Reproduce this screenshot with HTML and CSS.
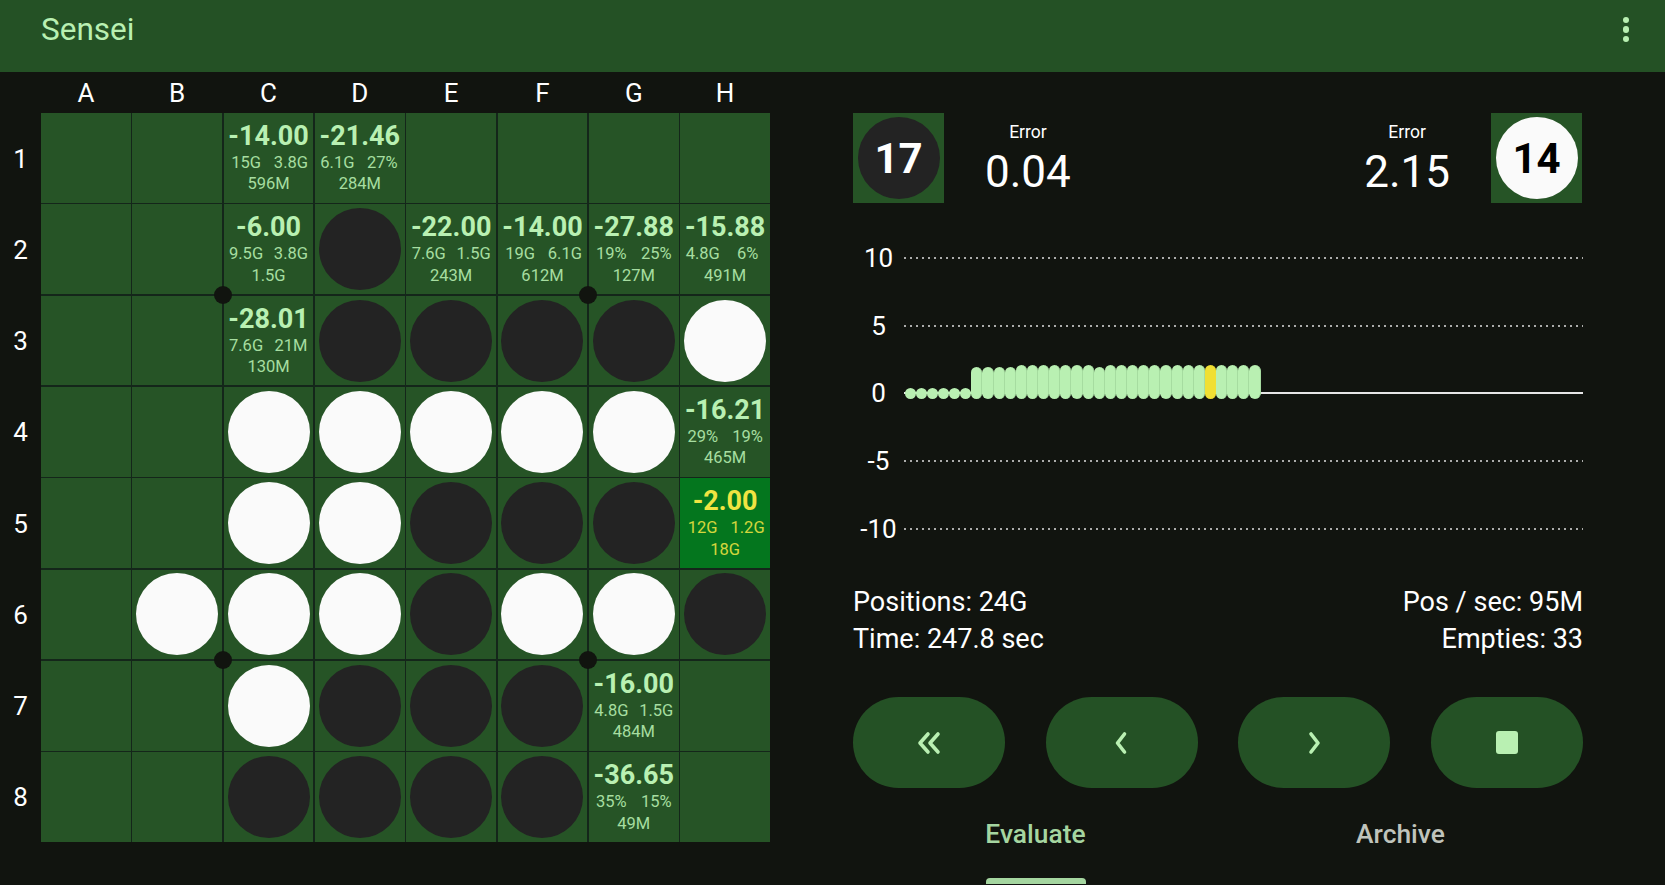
FILE: index.html
```html
<!DOCTYPE html>
<html lang="en">
<head>
    <meta charset="UTF-8">
    <meta name="viewport" content="width=device-width, initial-scale=1.0">
    <title>Sensei</title>
    <link rel="stylesheet" href="styles.css">
</head>
<body>
    <!-- App bar -->
    <header class="app-bar">
        <span class="app-title">Sensei</span>
        <div class="menu-dots"><i></i><i></i><i></i></div>
    </header>

    <main class="content">
        <!-- Board -->
        <section class="board-area">
            <div class="col-labels">
                <span>A</span><span>B</span><span>C</span><span>D</span><span>E</span><span>F</span><span>G</span><span>H</span>
            </div>
            <div class="board-row">
                <div class="row-labels">
                    <span>1</span><span>2</span><span>3</span><span>4</span><span>5</span><span>6</span><span>7</span><span>8</span>
                </div>
                <div class="board">
                    <!-- row 1 -->
                    <div class="cell"></div>
                    <div class="cell"></div>
                    <div class="cell"><b>-14.00</b><div class="pair"><span>15G</span><span>3.8G</span></div><small>596M</small></div>
                    <div class="cell"><b>-21.46</b><div class="pair"><span>6.1G</span><span>27%</span></div><small>284M</small></div>
                    <div class="cell"></div>
                    <div class="cell"></div>
                    <div class="cell"></div>
                    <div class="cell"></div>
                    <!-- row 2 -->
                    <div class="cell"></div>
                    <div class="cell"></div>
                    <div class="cell"><b>-6.00</b><div class="pair"><span>9.5G</span><span>3.8G</span></div><small>1.5G</small></div>
                    <div class="cell"><div class="disc black"></div></div>
                    <div class="cell"><b>-22.00</b><div class="pair"><span>7.6G</span><span>1.5G</span></div><small>243M</small></div>
                    <div class="cell"><b>-14.00</b><div class="pair"><span>19G</span><span>6.1G</span></div><small>612M</small></div>
                    <div class="cell"><b>-27.88</b><div class="pair"><span>19%</span><span>25%</span></div><small>127M</small></div>
                    <div class="cell"><b>-15.88</b><div class="pair"><span>4.8G</span><span>6%</span></div><small>491M</small></div>
                    <!-- row 3 -->
                    <div class="cell"></div>
                    <div class="cell"></div>
                    <div class="cell"><b>-28.01</b><div class="pair"><span>7.6G</span><span>21M</span></div><small>130M</small></div>
                    <div class="cell"><div class="disc black"></div></div>
                    <div class="cell"><div class="disc black"></div></div>
                    <div class="cell"><div class="disc black"></div></div>
                    <div class="cell"><div class="disc black"></div></div>
                    <div class="cell"><div class="disc white"></div></div>
                    <!-- row 4 -->
                    <div class="cell"></div>
                    <div class="cell"></div>
                    <div class="cell"><div class="disc white"></div></div>
                    <div class="cell"><div class="disc white"></div></div>
                    <div class="cell"><div class="disc white"></div></div>
                    <div class="cell"><div class="disc white"></div></div>
                    <div class="cell"><div class="disc white"></div></div>
                    <div class="cell"><b>-16.21</b><div class="pair"><span>29%</span><span>19%</span></div><small>465M</small></div>
                    <!-- row 5 -->
                    <div class="cell"></div>
                    <div class="cell"></div>
                    <div class="cell"><div class="disc white"></div></div>
                    <div class="cell"><div class="disc white"></div></div>
                    <div class="cell"><div class="disc black"></div></div>
                    <div class="cell"><div class="disc black"></div></div>
                    <div class="cell"><div class="disc black"></div></div>
                    <div class="cell best"><b>-2.00</b><div class="pair"><span>12G</span><span>1.2G</span></div><small>18G</small></div>
                    <!-- row 6 -->
                    <div class="cell"></div>
                    <div class="cell"><div class="disc white"></div></div>
                    <div class="cell"><div class="disc white"></div></div>
                    <div class="cell"><div class="disc white"></div></div>
                    <div class="cell"><div class="disc black"></div></div>
                    <div class="cell"><div class="disc white"></div></div>
                    <div class="cell"><div class="disc white"></div></div>
                    <div class="cell"><div class="disc black"></div></div>
                    <!-- row 7 -->
                    <div class="cell"></div>
                    <div class="cell"></div>
                    <div class="cell"><div class="disc white"></div></div>
                    <div class="cell"><div class="disc black"></div></div>
                    <div class="cell"><div class="disc black"></div></div>
                    <div class="cell"><div class="disc black"></div></div>
                    <div class="cell"><b>-16.00</b><div class="pair"><span>4.8G</span><span>1.5G</span></div><small>484M</small></div>
                    <div class="cell"></div>
                    <!-- row 8 -->
                    <div class="cell"></div>
                    <div class="cell"></div>
                    <div class="cell"><div class="disc black"></div></div>
                    <div class="cell"><div class="disc black"></div></div>
                    <div class="cell"><div class="disc black"></div></div>
                    <div class="cell"><div class="disc black"></div></div>
                    <div class="cell"><b>-36.65</b><div class="pair"><span>35%</span><span>15%</span></div><small>49M</small></div>
                    <div class="cell"></div>

                    <!-- Corner markers -->
                    <i class="marker m-tl"></i>
                    <i class="marker m-tr"></i>
                    <i class="marker m-bl"></i>
                    <i class="marker m-br"></i>
                </div>
            </div>
        </section>

        <!-- Side panel -->
        <section class="panel">
            <div class="score-row">
                <div class="player">
                    <div class="player-box"><div class="player-disc black">17</div></div>
                    <div class="error-block"><span class="error-label">Error</span><span class="error-value">0.04</span></div>
                </div>
                <div class="player">
                    <div class="error-block"><span class="error-label">Error</span><span class="error-value">2.15</span></div>
                    <div class="player-box"><div class="player-disc white">14</div></div>
                </div>
            </div>

            <!-- Error chart -->
            <div class="chart">
                <div class="chart-row"><span>10</span><div class="grid-line"></div></div>
                <div class="chart-row"><span>5</span><div class="grid-line"></div></div>
                <div class="chart-row">
                    <span>0</span><div class="zero-line"></div>
                    <div class="bars">
                        <i class="dot"></i><i class="dot"></i><i class="dot"></i><i class="dot"></i><i class="dot"></i><i class="dot"></i>
                        <i class="bar"></i><i class="bar"></i><i class="bar"></i><i class="bar"></i><i class="bar high"></i>
                        <i class="bar high"></i><i class="bar high"></i><i class="bar high"></i><i class="bar high"></i><i class="bar high"></i>
                        <i class="bar high"></i><i class="bar"></i><i class="bar high"></i><i class="bar high"></i><i class="bar high"></i>
                        <i class="bar high"></i><i class="bar high"></i><i class="bar high"></i><i class="bar high"></i><i class="bar high"></i>
                        <i class="bar high"></i><i class="bar high current"></i><i class="bar high"></i><i class="bar high"></i><i class="bar high"></i>
                        <i class="bar high"></i>
                    </div>
                </div>
                <div class="chart-row"><span>-5</span><div class="grid-line"></div></div>
                <div class="chart-row"><span>-10</span><div class="grid-line"></div></div>
            </div>

            <div class="stats">
                <div><p>Positions: 24G</p><p>Time: 247.8 sec</p></div>
                <div class="stats-right"><p>Pos / sec: 95M</p><p>Empties: 33</p></div>
            </div>

            <div class="controls">
                <button class="control">
                    <svg width="28" height="24" viewBox="0 0 28 24"><path d="M13 3 5 12l8 9M23 3l-8 9 8 9"/></svg>
                </button>
                <button class="control">
                    <svg width="16" height="24" viewBox="0 0 16 24"><path d="M10.5 3l-7 9 7 9"/></svg>
                </button>
                <button class="control">
                    <svg width="16" height="24" viewBox="0 0 16 24"><path d="M5 3l7 9-7 9"/></svg>
                </button>
                <button class="control"><span class="stop-icon"></span></button>
            </div>

            <div class="tabs">
                <div class="tab active">Evaluate<span class="tab-indicator"></span></div>
                <div class="tab">Archive</div>
            </div>
        </section>
    </main>
</body>
</html>
```

FILE: styles.css
```css
* {
    box-sizing: border-box;
}
body {
    margin: 0;
    height: 885px;
    overflow: hidden;
    font-family: Roboto, "Liberation Sans", sans-serif;
    background-color: #11140f;
    color: #fff;
}

/* App bar */
.app-bar {
    height: 72px;
    padding: 0 36px 13px 41px;
    background-color: #245125;
    display: flex;
    justify-content: space-between;
    align-items: center;
}
.app-title {
    font-size: 31.5px;
    color: #b9f0b2;
}
.menu-dots {
    display: flex;
    flex-direction: column;
    gap: 3px;
}
.menu-dots i {
    width: 6.5px;
    height: 6.5px;
    border-radius: 50%;
    background-color: #b9f0b2;
}

.content {
    display: flex;
    gap: 83px;
}

/* Board */
.board-area {
    width: 770px;
}
.col-labels {
    height: 41px;
    margin-left: 41px;
    display: grid;
    grid-template-columns: repeat(8, 1fr);
    column-gap: 1.6px;
    align-items: center;
    text-align: center;
    font-size: 26px;
}
.board-row {
    display: flex;
}
.row-labels {
    width: 41px;
    padding-top: 1px;
    display: grid;
    grid-template-rows: repeat(8, 1fr);
    row-gap: 1.6px;
    align-items: center;
    text-align: center;
    font-size: 26px;
}
.board {
    position: relative;
    width: 729px;
    height: 729px;
    display: grid;
    grid-template-columns: repeat(8, 1fr);
    grid-template-rows: repeat(8, 1fr);
    gap: 1.6px;
    background-color: #14261a;
}
.cell {
    background-color: #265426;
    display: flex;
    flex-direction: column;
    align-items: center;
    justify-content: center;
    color: #b9f0b2;
    font-size: 16.5px;
    line-height: 21.5px;
}
.cell b {
    font-size: 27px;
    line-height: 30px;
    margin-bottom: 1px;
}
.cell .pair {
    width: 100%;
    display: grid;
    grid-template-columns: 1fr 1fr;
    text-align: center;
    opacity: 0.88;
}
.cell small {
    font-size: 16.5px;
    opacity: 0.88;
}
.cell.best {
    background-color: #04761e;
    color: #f0e442;
}
.disc {
    width: 82px;
    height: 82px;
    border-radius: 50%;
}
.disc.black {
    background-color: #232323;
}
.disc.white {
    background-color: #fafafa;
}
.marker {
    position: absolute;
    width: 18px;
    height: 18px;
    border-radius: 50%;
    background-color: #11140f;
}
.m-tl { left: 173px; top: 173px; }
.m-tr { left: 538px; top: 173px; }
.m-bl { left: 173px; top: 538px; }
.m-br { left: 538px; top: 538px; }

/* Side panel */
.panel {
    width: 730px;
    padding-top: 41px;
}
.score-row {
    padding-right: 1px;
    display: flex;
    justify-content: space-between;
}
.player {
    display: flex;
    align-items: center;
    gap: 41px;
}
.player-box {
    width: 91px;
    height: 90px;
    background-color: #265426;
    display: flex;
    align-items: center;
    justify-content: center;
}
.player-disc {
    width: 82px;
    height: 82px;
    border-radius: 50%;
    display: flex;
    align-items: center;
    justify-content: center;
    font-size: 42px;
    font-weight: 700;
}
.player-disc.black {
    background-color: #232323;
    color: #fff;
}
.player-disc.white {
    background-color: #fafafa;
    color: #000;
}
.error-block {
    padding-top: 5px;
    display: flex;
    flex-direction: column;
    align-items: center;
}
.error-label {
    font-size: 17.5px;
    line-height: 22px;
}
.error-value {
    font-size: 44px;
    line-height: 58px;
}

/* Chart */
.chart {
    margin-top: 21px;
}
.chart-row {
    position: relative;
    height: 67.7px;
    display: flex;
    align-items: center;
    font-size: 26px;
}
.chart-row span {
    width: 51px;
    text-align: center;
}
.grid-line {
    flex: 1;
    height: 2px;
    background-image: repeating-linear-gradient(90deg, rgba(255, 255, 255, 0.65) 0 2px, transparent 2px 6px);
}
.zero-line {
    flex: 1;
    height: 2px;
    background-color: #e6e6e6;
}
.bars {
    position: absolute;
    left: 51.5px;
    top: 5.5px;
    height: 34px;
    display: flex;
    align-items: flex-end;
}
.bars i {
    display: block;
    width: 11.13px;
    border-radius: 6px;
    background-color: #b9f0b2;
}
.bars .dot {
    height: 11px;
}
.bars .bar {
    height: 32px;
    border-right: 1px solid #a6dca0;
}
.bars .bar.high {
    height: 34px;
}
.bars .current {
    background-color: #f0df33;
    border-right-color: #f0df33;
}

/* Stats */
.stats {
    margin-top: 22px;
    display: flex;
    justify-content: space-between;
    font-size: 27px;
    line-height: 37px;
}
.stats p {
    margin: 0;
}
.stats-right {
    text-align: right;
}

/* Buttons */
.controls {
    margin-top: 39px;
    display: flex;
    justify-content: space-between;
}
.control {
    width: 152px;
    height: 91px;
    border: none;
    border-radius: 46px;
    background-color: #245125;
    display: flex;
    align-items: center;
    justify-content: center;
    padding: 0;
}
.control svg {
    fill: none;
    stroke: #b9f0b2;
    stroke-width: 3.6;
    stroke-linecap: round;
    stroke-linejoin: round;
}
.stop-icon {
    width: 22px;
    height: 23px;
    border-radius: 3px;
    background-color: #b9f0b2;
}

/* Tabs */
.tabs {
    margin-top: 22px;
    display: grid;
    grid-template-columns: 1fr 1fr;
    text-align: center;
    font-size: 26.4px;
    font-weight: 500;
    line-height: 48px;
    color: #c0c4bc;
}
.tab {
    position: relative;
    height: 74px;
}
.tab.active {
    color: #a5d6a0;
}
.tab-indicator {
    position: absolute;
    left: 50%;
    bottom: 0;
    width: 100px;
    height: 6px;
    margin-left: -50px;
    border-radius: 4px 4px 0 0;
    background-color: #a5d6a0;
}
```
